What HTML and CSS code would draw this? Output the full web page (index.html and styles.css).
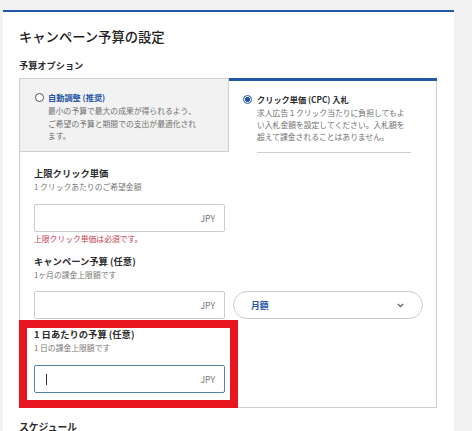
FILE: index.html
```html
<!DOCTYPE html>
<html lang="ja">
<head>
<meta charset="utf-8">
<link rel="stylesheet" href="styles.css">
</head>
<body>
<div class="page">
  <section class="card">
    <h1 class="title">キャンペーン予算の設定</h1>
    <h2 class="section-label">予算オプション</h2>
    <div class="budget-box">
      <div class="options">
        <div class="option option-auto">
          <div class="option-head">
            <span class="radio"></span>
            <span class="option-title link">自動調整 (推奨)</span>
          </div>
          <p class="option-desc">最小の予算で最大の成果が得られるよう、ご希望の予算と期間での支出が最適化されます。</p>
        </div>
        <div class="option option-cpc">
          <div class="option-head">
            <span class="radio checked"></span>
            <span class="option-title">クリック単価 (CPC) 入札</span>
          </div>
          <p class="option-desc divided">求人広告１クリック当たりに負担してもよい入札金額を設定してください。入札額を超えて課金されることはありません。</p>
        </div>
      </div>
      <div class="fields">
        <div class="field">
          <div class="field-label">上限クリック単価</div>
          <div class="field-help">1 クリックあたりのご希望金額</div>
          <div class="input"><span class="unit">JPY</span></div>
          <div class="field-error">上限クリック単価は必須です。</div>
        </div>
        <div class="field field-2">
          <div class="field-label">キャンペーン予算 (任意)</div>
          <div class="field-help">1ヶ月の課金上限額です</div>
          <div class="input-row">
            <div class="input"><span class="unit">JPY</span></div>
            <div class="select"><span class="select-value">月額</span>
              <svg class="chevron" width="7" height="5" viewBox="0 0 7 5"><path d="M0.8 0.9 L3.5 3.6 L6.2 0.9" fill="none" stroke="#555" stroke-width="1.2"/></svg>
            </div>
          </div>
        </div>
        <div class="field field-3 highlighted">
          <div class="field-label">1 日あたりの予算 (任意)</div>
          <div class="field-help">1 日の課金上限額です</div>
          <div class="input focused"><span class="caret"></span><span class="unit">JPY</span></div>
        </div>
      </div>
    </div>
    <h2 class="schedule">スケジュール</h2>
  </section>
  <div class="side"></div>
</div>
</body>
</html>
```
FILE: styles.css
```css
* { box-sizing: border-box; }
html, body { margin: 0; padding: 0; }
body {
  background: #f2f2f2;
  font-family: "Noto Sans CJK JP", "Noto Sans", sans-serif;
  color: #2d2d2d;
  width: 472px;
  height: 431px;
  overflow: hidden;
}
.page {
  display: flex;
  padding-top: 10px;
  padding-left: 3px;
  height: 431px;
}
.card {
  width: 451px;
  height: 421px;
  overflow: hidden;
  background: #fff;
  border-top: 2px solid #2557a7;
  padding: 16px 17px 0 16px;
}
.title {
  margin: 0;
  font-size: 13.3px;
  line-height: 18px;
  font-weight: 500;
  color: #1f1f1f;
}
.section-label {
  margin: 13px 0 0;
  font-size: 9.2px;
  line-height: 13px;
  font-weight: 700;
  color: #2d2d2d;
}
.budget-box {
  margin-top: 6px;
  width: 418px;
  border: 1px solid #cfcfcf;
  border-top: none;
}
.options {
  display: grid;
  grid-template-columns: 209px 208px;
}
.option { height: 74px; }
.option-auto {
  background: #f2f2f2;
  border-top: 1px solid #cfcfcf;
  border-right: 1px solid #cfcfcf;
  border-bottom: 1px solid #cfcfcf;
  padding: 12px 0 0 15px;
}
.option-cpc {
  border-top: 3px solid #2557a7;
  padding: 12px 0 0 14px;
}
.option-head {
  display: flex;
  align-items: center;
  height: 12px;
}
.radio {
  width: 9px;
  height: 9px;
  border-radius: 50%;
  border: 1px solid #555;
  background: #fff;
  margin-right: 4px;
  flex: none;
}
.radio.checked {
  border: 1.5px solid #2557a7;
  background: radial-gradient(circle, #2557a7 0 2.3px, #fff 2.6px);
}
.option-cpc .radio { margin-right: 5px; }
.option-title {
  font-size: 8.2px;
  line-height: 12px;
  font-weight: 700;
  color: #2d2d2d;
}
.option-title.link { color: #2557a7; }
.option-desc {
  margin: 2px 0 0 13px;
  width: 152px;
  font-size: 7.8px;
  line-height: 12.7px;
  color: #6f6f6f;
}
.option-cpc .option-desc {
  margin: 1.5px 0 0 14px;
  width: 154px;
  line-height: 12px;
  padding-bottom: 9px;
}
.divided { border-bottom: 1px solid #cfcfcf; }
.fields {
  padding: 15px 0 7px 14px;
}
.field-label {
  font-size: 9.3px;
  line-height: 13px;
  font-weight: 700;
  color: #2d2d2d;
}
.field-help {
  margin-top: 1px;
  font-size: 7.8px;
  line-height: 12px;
  color: #767676;
}
.input {
  margin-top: 11px;
  width: 191px;
  height: 28px;
  border: 1px solid #cccccc;
  border-radius: 2px;
  display: flex;
  align-items: center;
  padding: 0 9px 0 11px;
  background: #fff;
}
.input.focused { border-color: #4f86a8; }
.unit {
  margin-left: auto;
  font-size: 8.6px;
  color: #767676;
}
.caret {
  width: 1px;
  height: 11px;
  background: #333;
}
.field-error {
  margin-top: 1px;
  font-size: 7.8px;
  line-height: 12px;
  color: #c73a52;
}
.field-2 { margin-top: 10px; }
.input-row {
  display: flex;
  gap: 8px;
  margin-top: 10px;
}
.input-row .input { margin-top: 0; }
.select {
  width: 190px;
  height: 28px;
  border: 1px solid #cccccc;
  border-radius: 14px;
  display: flex;
  align-items: center;
  padding: 0 18px 0 17px;
}
.select-value {
  font-size: 8.8px;
  font-weight: 700;
  color: #2557a7;
}
.chevron { margin-left: auto; }
.field-3 {
  margin: 9px 0 0 -7px;
  width: 203px;
  padding: 0 0 7px 7px;
}
.highlighted { outline: 8px solid #e8161f; }
.schedule {
  margin: 13px 0 0;
  font-size: 9.8px;
  line-height: 13px;
  font-weight: 700;
  color: #2d2d2d;
}
.side { flex: 1; }
```
